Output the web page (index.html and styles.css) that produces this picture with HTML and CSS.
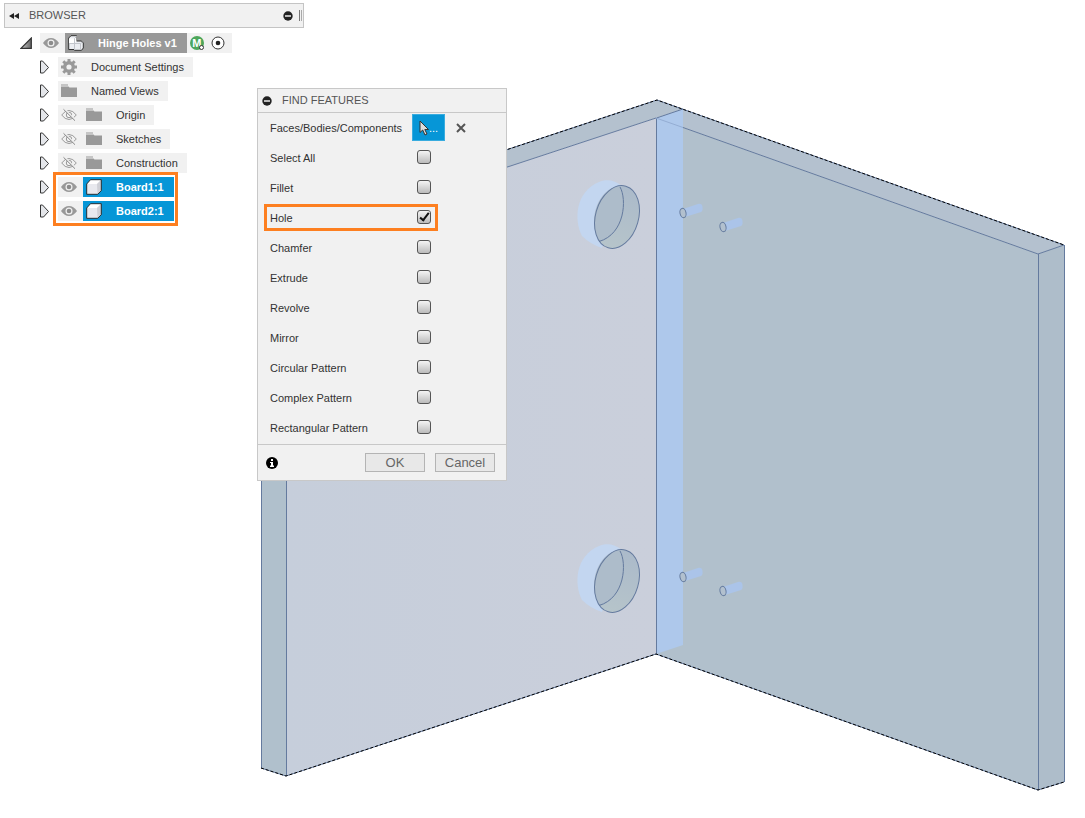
FILE: index.html
```
<!DOCTYPE html>
<html lang="en">

<head>
    <meta charset="UTF-8">
    <meta name="viewport" content="width=device-width, initial-scale=1.0">
    <title>Hinge Holes v1</title>
    <link rel="stylesheet" href="styles.css">
</head>

<body>

    <!-- shared icons -->
    <svg class="sprite" aria-hidden="true">
        <symbol id="arrow" viewBox="0 0 11 14">
            <path d="M1.500 1H3.500L9.500 7.500 4.500 13H1.500Z" fill="#e4e6ea" stroke="#333" stroke-linejoin="round"/>
        </symbol>
        <symbol id="eye" viewBox="0 0 16 12">
            <path d="M0 6Q3.500 1 8 1t8 5q-3.500 5-8 5T0 6Z" fill="#999"/>
            <circle cx="8" cy="6" r="3.500" fill="#f1f1f1"/>
            <circle cx="8" cy="6" r="2.300" fill="#8c8c8c"/>
        </symbol>
        <symbol id="eye-off" viewBox="0 0 16 12">
            <path d="M.7 6Q4 1.500 8 1.500T15.300 6Q12 10.500 8 10.500T.7 6Z" fill="none" stroke="#999"/>
            <circle cx="8" cy="6" r="2.700" fill="none" stroke="#999"/>
            <path d="M3.500 0 14.500 11" stroke="#f1f1f1" stroke-width="1.500"/>
            <path d="M2.500.3 14 11.700" stroke="#888"/>
        </symbol>
        <symbol id="folder" viewBox="0 0 16 14">
            <path d="M0 .5h7v1H0ZM0 2.500h7.500l1 1H16V13H0Z" fill="#999"/>
        </symbol>
        <symbol id="body" viewBox="0 0 16 16">
            <path d="M1 5 4.500 1H15v10.500L11.500 15H1Z" fill="#e8e9ee"/>
            <path d="M1 5 4.500 1H15l-4 4Z" fill="#fff"/>
            <path d="M11 5 15 1v10.500L11.500 15Z" fill="#cfd0d6"/>
            <path d="M.7 15.300V5L4.500.7h10.800v11L11.700 15.300Z" fill="none" stroke="#333"/>
        </symbol>
        <symbol id="minus" viewBox="0 0 10 10">
            <circle cx="5" cy="5" r="4.700" fill="#222"/>
            <path d="M2 5h6" stroke="#eee" stroke-width="1.500"/>
        </symbol>
    </svg>

    <main class="canvas">
        <svg class="model" viewBox="0 0 1085 818" preserveAspectRatio="xMinYMin meet" role="img" aria-label="Two boards joined at a corner">
            <defs>
                <linearGradient id="bore" x1="0" y1="0" x2="0" y2="1">
                    <stop offset="0" stop-color="#abbaca"/>
                    <stop offset="1" stop-color="#b6c4ca"/>
                </linearGradient>
                <linearGradient id="front" x1="0" y1="0" x2="1" y2="0">
                    <stop offset="0" stop-color="#c6cedb"/>
                    <stop offset="1" stop-color="#cacfdb"/>
                </linearGradient>
                <g id="cup">
                    <path d="M599 546C606 543 615 544 622 550L602 612Q590 608 582 600C574 584 575 556 599 546Z" fill="#c3d6f0"/>
                    <ellipse cx="617" cy="581" rx="21.500" ry="32" transform="rotate(16 617 581)" fill="url(#bore)"/>
                    <path d="M620 550.500C602 550 589 577 596 597Q598 603 600 606C625 598 627 563 620 550.500Z" fill="#adbcca"/>
                    <path d="M620 551C627 563 625 598 599 605.500" class="edge"/>
                    <ellipse cx="617" cy="581" rx="21.500" ry="32" transform="rotate(16 617 581)" class="edge"/>
                </g>
                <g id="pin">
                    <path d="M0-4 15-9Q19-10 19.500-6T18-1L2 4Z" fill="#abc4e9"/>
                    <ellipse rx="3" ry="4.700" transform="rotate(-12)" fill="#b2c0ce" class="rim"/>
                </g>
            </defs>

            <!-- left board -->
            <path d="M261 231 657 100 683 109 656 118 286 240Z" fill="#b4c1ce"/>
            <path d="M261 231 286 240V776L261 768Z" fill="#b0c0cc"/>
            <path d="M286 240 656 118V654L286 776Z" fill="url(#front)"/>

            <!-- right board -->
            <path d="M657 100 1064 245 1038 254 656 118 683 109Z" fill="#b4c1cf"/>
            <path d="M656 118 1038 254V790L656 654Z" fill="#b1c0cc"/>
            <path d="M1038 254 1064 245V782L1038 790Z" fill="#aebdca"/>
            <path d="M656 118 683 109V645L656 654Z" fill="#aec8eb"/>

            <path d="M656.500 118 683 109M286 240 656 118M683 127.500 1038 254 1064 245M261.500 231V768M286.500 240V776M1038.500 254V790M1064.500 245V782M656.500 118V654" class="edge"/>
            <path d="M656 118 683 127.500" class="edge hidden-edge"/>
            <path d="M261 231 657 100 1064 245M261 768 286 776 656 654 1038 790 1064 782" class="edge"/>
            <path d="M261 231 657 100 1064 245M261 768 286 776 656 654 1038 790 1064 782" class="outline"/>

            <use href="#cup" y="-364"/>
            <use href="#cup"/>
            <use href="#pin" x="683" y="213"/>
            <use href="#pin" x="723" y="227"/>
            <use href="#pin" x="683" y="577"/>
            <use href="#pin" x="723" y="591"/>
        </svg>

        <aside class="browser">
            <header class="browser-header">
                <svg class="rewind" viewBox="0 0 10 6"><path d="M0 3 5 0V6ZM5 3l5-3V6Z" fill="#222"/></svg>
                <h2>BROWSER</h2>
                <svg class="minus"><use href="#minus"/></svg>
                <span class="grip"></span>
            </header>

            <div class="row root">
                <svg class="toggle open" viewBox="0 0 12 12">
                    <defs><linearGradient id="tri"><stop offset="0" stop-color="#ccc"/><stop offset="1" stop-color="#666"/></linearGradient></defs>
                    <path d="M1 11.300H11.300V1Z" fill="url(#tri)" stroke="#333" stroke-width="1.200"/>
                </svg>
                <div class="chip">
                    <svg class="icon"><use href="#eye"/></svg>
                    <span class="name">
                        <svg class="icon" viewBox="0 0 16 16">
                            <path d="M.7 14.500V3L3 .7H8.500V6H13.500L15.300 8v5L13.500 15.300H6.500V14.500Z" fill="#eceef2" stroke="#333"/>
                            <path d="M1 3.500H6L8.500 1V6L6.500 8.500H1Z" fill="#fff"/>
                            <path d="M6.500 3.500V15M1 8.500H12.500L14.500 7M12.500 8.500V15M6.500 3.500 8.500 1.500" fill="none" stroke="#c3c6cc"/>
                        </svg>
                        <b>Hinge Holes v1</b>
                    </span>
                    <span class="badge">M</span>
                    <svg class="target" viewBox="0 0 14 14">
                        <circle cx="7" cy="7" r="6" fill="#fff" stroke="#333"/>
                        <circle cx="7" cy="7" r="2.300" fill="#222"/>
                    </svg>
                </div>
            </div>

            <ul class="tree">
                <li class="row">
                    <svg class="toggle"><use href="#arrow"/></svg>
                    <div class="chip">
                        <svg class="icon" viewBox="0 0 16 16">
                            <circle cx="8" cy="8" r="4.300" fill="none" stroke="#999" stroke-width="3.400"/>
                            <path d="M8 0v3M8 13v3M0 8h3M13 8h3M2.300 2.300l2.200 2.200M11.500 11.500l2.200 2.200M2.300 13.700l2.200-2.200M11.500 4.500l2.200-2.200" stroke="#999" stroke-width="3"/>
                        </svg>
                        <span>Document Settings</span>
                    </div>
                </li>
                <li class="row">
                    <svg class="toggle"><use href="#arrow"/></svg>
                    <div class="chip">
                        <svg class="icon"><use href="#folder"/></svg>
                        <span>Named Views</span>
                    </div>
                </li>
                <li class="row">
                    <svg class="toggle"><use href="#arrow"/></svg>
                    <div class="chip">
                        <svg class="icon"><use href="#eye-off"/></svg>
                        <svg class="icon"><use href="#folder"/></svg>
                        <span>Origin</span>
                    </div>
                </li>
                <li class="row">
                    <svg class="toggle"><use href="#arrow"/></svg>
                    <div class="chip">
                        <svg class="icon"><use href="#eye-off"/></svg>
                        <svg class="icon"><use href="#folder"/></svg>
                        <span>Sketches</span>
                    </div>
                </li>
                <li class="row">
                    <svg class="toggle"><use href="#arrow"/></svg>
                    <div class="chip">
                        <svg class="icon"><use href="#eye-off"/></svg>
                        <svg class="icon"><use href="#folder"/></svg>
                        <span>Construction</span>
                    </div>
                </li>
            </ul>
            <ul class="tree marked">
                <li class="row">
                    <svg class="toggle"><use href="#arrow"/></svg>
                    <div class="chip">
                        <svg class="icon"><use href="#eye"/></svg>
                        <span class="name selected"><svg class="icon"><use href="#body"/></svg><b>Board1:1</b></span>
                    </div>
                </li>
                <li class="row">
                    <svg class="toggle"><use href="#arrow"/></svg>
                    <div class="chip">
                        <svg class="icon"><use href="#eye"/></svg>
                        <span class="name selected"><svg class="icon"><use href="#body"/></svg><b>Board2:1</b></span>
                    </div>
                </li>
            </ul>
        </aside>

        <form class="dialog">
            <header class="dialog-header">
                <svg class="minus"><use href="#minus"/></svg>
                <h2>FIND FEATURES</h2>
            </header>

            <div class="features">
                <div class="feature">
                    <span>Faces/Bodies/Components</span>
                    <button type="button" class="select" aria-label="Select">
                        <svg viewBox="0 0 10 16"><path d="M1 1V12.500L3.700 10 6 15 8 14 5.800 9.500H9.500Z" fill="#ddd" stroke="#333"/></svg>
                        <span>...</span>
                    </button>
                    <button type="button" class="clear" aria-label="Clear selection">
                        <svg viewBox="0 0 10 10"><path d="M1 1 9 9M9 1 1 9" stroke="#555" stroke-width="2"/></svg>
                    </button>
                </div>
                <label class="feature"><span>Select All</span><input type="checkbox"></label>
                <label class="feature"><span>Fillet</span><input type="checkbox"></label>
                <label class="feature hole"><span>Hole</span><input type="checkbox" checked></label>
                <label class="feature"><span>Chamfer</span><input type="checkbox"></label>
                <label class="feature"><span>Extrude</span><input type="checkbox"></label>
                <label class="feature"><span>Revolve</span><input type="checkbox"></label>
                <label class="feature"><span>Mirror</span><input type="checkbox"></label>
                <label class="feature"><span>Circular Pattern</span><input type="checkbox"></label>
                <label class="feature"><span>Complex Pattern</span><input type="checkbox"></label>
                <label class="feature"><span>Rectangular Pattern</span><input type="checkbox"></label>
            </div>

            <footer class="dialog-footer">
                <svg class="info" viewBox="0 0 12 12">
                    <circle cx="6" cy="6" r="6" fill="#000"/>
                    <path d="M5 2h2v2H5ZM4 5h3v3.500h1V10H4V8.500h1V6H4Z" fill="#fff"/>
                </svg>
                <button type="submit" class="btn">OK</button>
                <button type="button" class="btn">Cancel</button>
            </footer>
        </form>
    </main>

</body>

</html>
```
FILE: styles.css
```
*,
*::before,
*::after {
    margin: 0;
    padding: 0;
    box-sizing: border-box;
}

body {
    font-family: "Liberation Sans", Arial, sans-serif;
    font-size: 11px;
    line-height: 14px;
    color: #333;
    background-color: #fff;
}

h2 {
    font-size: 11px;
    font-weight: normal;
    color: #555;
}

ul {
    list-style: none;
}

svg {
    display: block;
    flex-shrink: 0;
}

.sprite {
    position: absolute;
    width: 0;
    height: 0;
}

.canvas {
    position: relative;
    min-height: 100vh;
    overflow: hidden;
}

/* 3D model */
.model {
    width: 100%;
}

.edge {
    fill: none;
    stroke: #647a9e;
    stroke-width: 1;
}

.hidden-edge {
    stroke: #94add3;
}

.rim {
    stroke: #647a9e;
}

.outline {
    fill: none;
    stroke: #000;
    stroke-width: 1;
    stroke-dasharray: 3 2;
}

/* browser panel */
.browser {
    position: absolute;
    top: 3px;
    left: 4px;
    width: 300px;
}

.browser-header {
    display: flex;
    align-items: center;
    height: 25px;
    margin-bottom: 5px;
    padding-left: 4px;
    background-color: #f1f1f1;
    border: 1px solid #c4c4c4;
}

.browser-header h2,
.dialog-header h2 {
    line-height: 12px;
    padding-bottom: 1px;
}

.rewind {
    width: 10px;
    height: 6px;
    margin-right: 10px;
}

.minus {
    width: 10px;
    height: 10px;
}

.browser-header .minus {
    margin-left: auto;
}

.grip {
    width: 3px;
    height: 11px;
    margin: 0 1px 0 6px;
    border-left: 1px solid #777;
    border-right: 1px solid #aaa;
}

.row {
    display: flex;
    align-items: center;
    height: 20px;
    margin-bottom: 4px;
}

.root {
    padding-left: 16px;
}

.tree {
    padding-left: 35px;
}

.toggle {
    width: 11px;
    height: 14px;
    margin-right: 8px;
}

.toggle.open {
    width: 12px;
    height: 12px;
}

.chip {
    display: flex;
    align-items: center;
    height: 20px;
    padding: 0 9px 0 3px;
    background-color: #f1f1f1;
    white-space: nowrap;
}

.icon {
    width: 16px;
    height: 16px;
    margin-right: 9px;
}

.chip > span:last-child {
    margin-left: 5px;
}

.chip .name {
    display: flex;
    align-items: center;
    gap: 5px;
    height: 20px;
    margin-left: -3px;
    padding: 0 10px 0 3px;
    color: #fff;
    background-color: #999;
}

.chip:has(.selected) {
    padding-right: 0;
}

.chip > .name.selected {
    margin-left: -3px;
    background-color: #0696d7;
}

.root .chip {
    padding-right: 7px;
}

.badge {
    position: relative;
    width: 14px;
    height: 14px;
    margin: 0 7px 0 3px;
    border-radius: 50%;
    background-color: #4da65a;
    color: #fff;
    font-weight: bold;
    text-align: center;
}

.badge::after {
    content: "";
    position: absolute;
    right: 0;
    bottom: 0;
    width: 5px;
    height: 5px;
    border: 1px solid #333;
    border-radius: 50%;
    background-color: #fff;
}

.target {
    width: 14px;
    height: 14px;
}

.marked {
    position: relative;
}

.marked::after {
    content: "";
    position: absolute;
    top: -5px;
    left: 49px;
    width: 125px;
    height: 54px;
    border: 3px solid #fd7f20;
}

/* find features dialog */
.dialog {
    position: absolute;
    top: 88px;
    left: 257px;
    width: 250px;
    background-color: #f1f1f1;
    border: 1px solid #c8c8c8;
}

.dialog-header {
    display: flex;
    align-items: center;
    gap: 10px;
    height: 24px;
    padding-left: 4px;
    border-bottom: 1px solid #c8c8c8;
}

.features {
    display: grid;
    gap: 3px;
    padding: 1px 6px 3px;
}

.feature {
    display: flex;
    align-items: center;
    width: 174px;
    height: 27px;
    padding-left: 3px;
    border: 3px solid transparent;
    white-space: nowrap;
}

.feature > span {
    width: 142px;
    flex-shrink: 0;
}

.hole {
    border-color: #fd7f20;
}

input[type="checkbox"] {
    appearance: none;
    width: 14px;
    height: 14px;
    margin-left: 5px;
    margin-bottom: 1px;
    border: 1px solid #555;
    border-radius: 3px;
    background: linear-gradient(#f4f4f4, #bbb);
    position: relative;
}

input[type="checkbox"]:checked::after {
    content: "";
    position: absolute;
    top: 0;
    left: 4px;
    width: 5px;
    height: 10px;
    border: solid #111;
    border-width: 0 2px 2px 0;
    transform: rotate(38deg);
}

.select {
    display: flex;
    align-items: center;
    justify-content: center;
    flex-shrink: 0;
    width: 33px;
    height: 27px;
    background-color: #0696d7;
    border: 1px solid #38acdf;
    color: #fff;
    font: inherit;
}

.select svg {
    width: 10px;
    height: 16px;
}

.clear {
    flex-shrink: 0;
    margin-left: 11px;
    background: none;
    border: none;
}

.clear svg {
    width: 10px;
    height: 10px;
}

.dialog-footer {
    display: flex;
    align-items: center;
    gap: 10px;
    height: 36px;
    padding: 0 11px 0 8px;
    border-top: 1px solid #c8c8c8;
}

.info {
    width: 12px;
    height: 12px;
    margin-right: auto;
}

.btn {
    width: 60px;
    height: 19px;
    background-color: #e8e8e8;
    border: 1px solid #b4b4b4;
    color: #666;
    font-family: inherit;
    font-size: 13px;
    line-height: 17px;
}
```
